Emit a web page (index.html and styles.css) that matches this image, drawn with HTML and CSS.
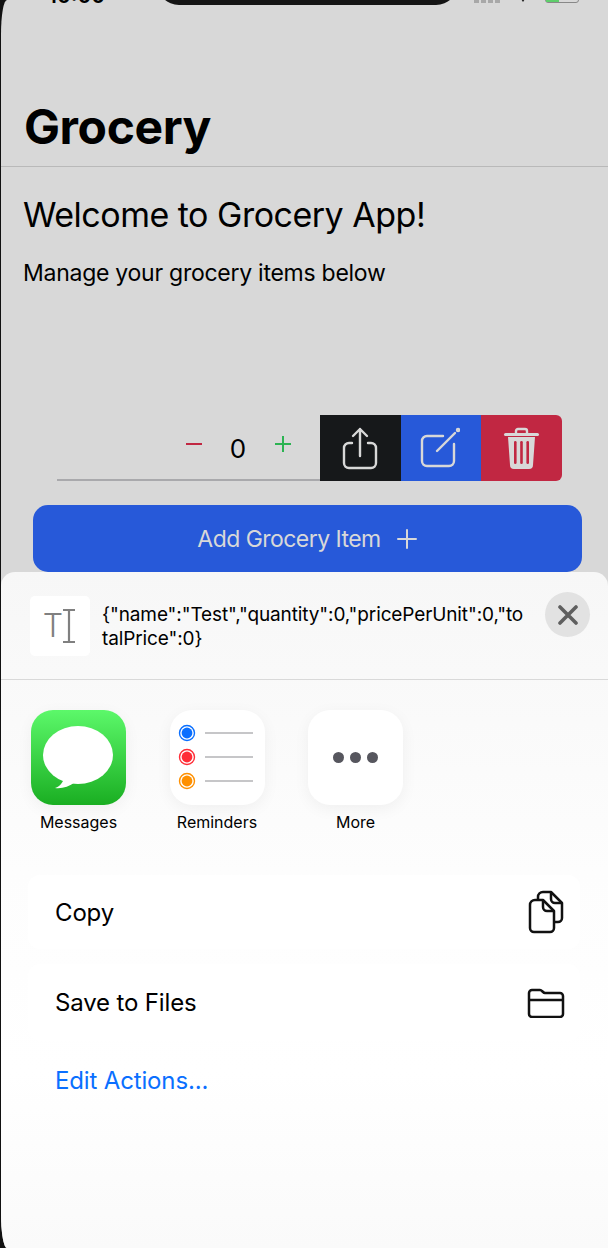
FILE: index.html
```html
<!DOCTYPE html>
<html>
  <head>
    <meta charset="UTF-8" />
    <meta name="viewport" content="width=device-width, initial-scale=1" />
    <title>Grocery</title>
    <link rel="stylesheet" href="styles.css">
  </head>
  <body>
    <main class="screen">
      <div class="status-bar">
        <span class="status-time">10:00</span>
        <div class="notch"></div>
        <div class="status-icons">
          <span class="signal"></span>
          <span class="wifi"></span>
          <span class="battery"><span class="battery-level"></span></span>
        </div>
      </div>

      <header class="nav-header">
        <h1>Grocery</h1>
      </header>

      <section class="content">
        <h2>Welcome to Grocery App!</h2>
        <p>Manage your grocery items below</p>
      </section>

      <div class="item-row">
        <div class="item-main">
          <span class="qty-minus"></span>
          <span class="qty-value">0</span>
          <span class="qty-plus"></span>
        </div>
        <div class="swipe-btn swipe-share">
          <svg width="36" height="44" viewBox="0 0 36 44" fill="none" stroke="#d8d8d8" stroke-width="2.4" stroke-linecap="round" stroke-linejoin="round">
            <path d="M10 17H7a5 5 0 0 0-5 5v15a5 5 0 0 0 5 5h22a5 5 0 0 0 5-5V22a5 5 0 0 0-5-5h-3" />
            <path d="M18 30V3M11 10l7-7 7 7" />
          </svg>
        </div>
        <div class="swipe-btn swipe-edit">
          <svg class="edit-icon" width="40" height="42" viewBox="0 0 40 42" fill="none" stroke="#d8d8d8" stroke-width="2.4" stroke-linecap="round" stroke-linejoin="round">
            <path d="M23 9H7a5 5 0 0 0-5 5v20a5 5 0 0 0 5 5h22a5 5 0 0 0 5-5V17" />
            <path d="M17 24L35 6" />
            <circle cx="38" cy="3" r="1" />
          </svg>
        </div>
        <div class="swipe-btn swipe-delete">
          <svg width="37" height="43" viewBox="0 0 37 43">
            <rect x="1" y="6" width="35" height="3" rx="1.5" fill="#d8d8d8" />
            <path d="M13 6V4a2 2 0 0 1 2-2h7a2 2 0 0 1 2 2v2" fill="none" stroke="#d8d8d8" stroke-width="2.4" />
            <path d="M5 10h27l-2 28a4 4 0 0 1-4 4H11a4 4 0 0 1-4-4z" fill="#d8d8d8" />
            <rect x="11" y="14" width="2.6" height="23" rx="1.3" fill="#c12742" />
            <rect x="17.2" y="14" width="2.6" height="23" rx="1.3" fill="#c12742" />
            <rect x="23.4" y="14" width="2.6" height="23" rx="1.3" fill="#c12742" />
          </svg>
        </div>
      </div>

      <button class="add-btn">
        Add Grocery Item
        <svg width="22" height="22" viewBox="0 0 22 22" stroke="#d8d8d8" stroke-width="2" stroke-linecap="round">
          <path d="M11 2v18M2 11h18" />
        </svg>
      </button>

      <section class="share-sheet">
        <div class="sheet-head">
          <div class="text-tile">
            <span class="text-tile-t">T</span>
            <svg width="12" height="34" viewBox="0 0 12 34" fill="none" stroke="#808080" stroke-width="2.2">
              <path d="M0 1h12M6 1v32M0 33h12" />
            </svg>
          </div>
          <div class="sheet-text">{"name":"Test","quantity":0,"pricePerUnit":0,"totalPrice":0}</div>
          <div class="sheet-close">
            <svg width="20" height="20" viewBox="0 0 20 20" stroke="#5f5f5f" stroke-width="3.6" stroke-linecap="round">
              <path d="M2 2l16 16M18 2L2 18" />
            </svg>
          </div>
        </div>

        <div class="app-row">
          <div class="app">
            <div class="app-icon app-messages">
              <svg width="95" height="95" viewBox="0 0 95 95">
                <ellipse cx="47" cy="45" rx="35" ry="29" fill="#fff" />
                <path d="M33 68c-1 5-5 9-9 10 6 1 14-1 20-6z" fill="#fff" />
              </svg>
            </div>
            <span>Messages</span>
          </div>
          <div class="app">
            <div class="app-icon">
              <svg width="95" height="95" viewBox="0 0 95 95" fill="none">
                <circle cx="17" cy="23" r="7.5" stroke="#0a6fff" stroke-width="1.4" />
                <circle cx="17" cy="23" r="5.4" fill="#0a6fff" />
                <path d="M35 23h48" stroke="#c6c6c8" stroke-width="2" />
                <circle cx="17" cy="47" r="7.5" stroke="#ff2d37" stroke-width="1.4" />
                <circle cx="17" cy="47" r="5.4" fill="#ff2d37" />
                <path d="M35 47h48" stroke="#c6c6c8" stroke-width="2" />
                <circle cx="17" cy="71" r="7.5" stroke="#ff9000" stroke-width="1.4" />
                <circle cx="17" cy="71" r="5.4" fill="#ff9000" />
                <path d="M35 71h48" stroke="#c6c6c8" stroke-width="2" />
              </svg>
            </div>
            <span>Reminders</span>
          </div>
          <div class="app">
            <div class="app-icon app-more">
              <i></i><i></i><i></i>
            </div>
            <span>More</span>
          </div>
        </div>

        <div class="action-card action-copy">
          <span>Copy</span>
          <svg width="38" height="44" viewBox="0 0 38 44" fill="none" stroke="#111" stroke-width="2.5" stroke-linejoin="round">
            <path d="M11 10V7a5 5 0 0 1 5-5h8l11 11v15a4 4 0 0 1-4 4h-4" />
            <path d="M24 2v7a4 4 0 0 0 4 4h7" />
            <path d="M8 10h8l11 11v17a4 4 0 0 1-4 4H7a4 4 0 0 1-4-4V15a5 5 0 0 1 5-5z" fill="#fff" />
            <path d="M16 10v7a4 4 0 0 0 4 4h7" />
          </svg>
        </div>
        <div class="action-card action-save">
          <span>Save to Files</span>
          <svg width="38" height="30" viewBox="0 0 38 30" fill="none" stroke="#111" stroke-width="2.5" stroke-linejoin="round">
            <path d="M2 5a3 3 0 0 1 3-3h8c2 0 3 3 5 3h15a3 3 0 0 1 3 3v18a3 3 0 0 1-3 3H5a3 3 0 0 1-3-3z" />
            <path d="M2 12h34" />
          </svg>
        </div>
        <a class="edit-actions">Edit Actions...</a>
      </section>
    </main>
  </body>
</html>
```

FILE: styles.css
```css
html,
body {
  margin: 0;
  height: 100%;
  background-color: #111;
}

body {
  font-family: Inter, "Liberation Sans", sans-serif;
  overflow: hidden;
}

.screen {
  box-sizing: border-box;
  width: 607px;
  height: 1248px;
  margin-left: 1px;
  display: flex;
  flex-direction: column;
  background-color: #d8d8d8;
  border-top-left-radius: 6px 34px;
  border-bottom-left-radius: 6px 34px;
  overflow: hidden;
}

/* only the bottom of the status bar is in the shot */
.status-bar {
  height: 5px;
  flex: none;
  position: relative;
  display: flex;
}

.status-time {
  position: absolute;
  left: 47px;
  top: -15px;
  font-size: 21px;
  line-height: 22px;
  font-weight: 600;
  color: #000;
}

.notch {
  position: absolute;
  left: 156px;
  top: -30px;
  width: 301px;
  height: 35px;
  background-color: #151515;
  border-radius: 0 0 22px 22px;
}

.status-icons {
  position: absolute;
  left: 473px;
  top: -10px;
  display: flex;
  gap: 16px;
}

.signal {
  width: 27px;
  height: 13px;
  background: repeating-linear-gradient(90deg, #a8a8a8 0 5px, transparent 5px 7px);
}

.wifi {
  width: 0;
  height: 0;
  margin-top: 3px;
  border: 6px solid transparent;
  border-top: 9px solid #222;
  border-bottom: 0;
}

.battery {
  width: 32px;
  height: 11px;
  border: 1px solid #888;
  border-radius: 3px;
  display: block;
}

.battery-level {
  display: block;
  width: 13px;
  height: 100%;
  background-color: #5fce6c;
}

.nav-header {
  height: 162px;
  flex: none;
  box-sizing: border-box;
  border-bottom: 1px solid #b9b9b9;
  padding: 93px 0 0 23px;
}

h1 {
  margin: 0;
  font-size: 48px;
  line-height: 58px;
  font-weight: 700;
  letter-spacing: -0.4px;
  color: #000;
}

.content {
  height: 248px;
  flex: none;
  box-sizing: border-box;
  padding: 27px 0 0 22px;
}

h2 {
  margin: 0;
  font-size: 34px;
  line-height: 42px;
  font-weight: 400;
  letter-spacing: -0.5px;
  color: #000;
}

.content p {
  margin: 22px 0 0;
  font-size: 23px;
  line-height: 30px;
  letter-spacing: -0.26px;
  color: #000;
}

.item-row {
  height: 66px;
  flex: none;
  display: flex;
  margin-left: 56px;
  width: 505px;
}

.item-main {
  width: 263px;
  flex: none;
  box-sizing: border-box;
  border-bottom: 2px solid #a9a9ac;
  display: flex;
  align-items: center;
  padding-left: 129px;
}

.qty-minus {
  width: 16px;
  height: 2px;
  margin-bottom: 6px;
  background-color: #c12742;
}

.qty-value {
  width: 26px;
  margin: 4px 0 0 23px;
  font-size: 26px;
  line-height: 30px;
  text-align: center;
  color: #000;
}

.qty-plus {
  width: 16px;
  height: 16px;
  margin: 0 0 6px 24px;
  background:
    linear-gradient(#2cb352, #2cb352) center / 16px 2px no-repeat,
    linear-gradient(#2cb352, #2cb352) center / 2px 16px no-repeat;
}

.swipe-btn {
  flex: 1;
  display: flex;
  align-items: center;
  justify-content: center;
}

.swipe-share {
  background-color: #16181a;
}

.swipe-edit {
  background-color: #2759d9;
}

.edit-icon {
  margin-right: 3px;
}

.swipe-delete {
  background-color: #c12742;
  border-radius: 0 6px 6px 0;
}

.add-btn {
  flex: none;
  width: 549px;
  height: 67px;
  margin: 24px 0 0 32px;
  display: flex;
  align-items: center;
  justify-content: center;
  gap: 15px;
  border: none;
  border-radius: 15px;
  background-color: #2759d9;
  color: #d8d8d8;
  font-family: inherit;
  font-size: 23px;
  letter-spacing: -0.55px;
}

.share-sheet {
  flex: 1;
  border-radius: 14px 14px 0 0;
  background: linear-gradient(#f7f7f7 0, #fdfdfd 300px, #fff 500px, #fafafa 676px);
}

.sheet-head {
  height: 108px;
  box-sizing: border-box;
  border-bottom: 1px solid #d9d9d9;
  padding: 24px 18px 0 29px;
  display: flex;
  align-items: flex-start;
}

.text-tile {
  width: 60px;
  height: 60px;
  flex: none;
  display: flex;
  align-items: center;
  justify-content: center;
  padding-right: 2px;
  box-sizing: border-box;
  background-color: #fff;
  border-radius: 5px;
}

.text-tile-t {
  font-size: 32px;
  line-height: 36px;
  font-weight: 300;
  color: #808080;
}

.sheet-text {
  width: 425px;
  flex: none;
  margin: 7px 0 0 12px;
  font-size: 19px;
  line-height: 24px;
  letter-spacing: -0.12px;
  color: #000;
  word-break: break-all;
}

.sheet-close {
  width: 45px;
  height: 45px;
  flex: none;
  margin: -4px 0 0 18px;
  border-radius: 50%;
  background-color: #e2e2e2;
  display: flex;
  align-items: center;
  justify-content: center;
}

.app-row {
  display: flex;
  gap: 43.5px;
  padding: 30px 0 0 30px;
}

.app {
  width: 95px;
  display: flex;
  flex-direction: column;
  align-items: center;
  gap: 7px;
  font-size: 16px;
  line-height: 20px;
  color: #000;
  white-space: nowrap;
}

.app-icon {
  width: 95px;
  height: 95px;
  border-radius: 22px;
  background-color: #fff;
  box-shadow: 0 4px 16px rgba(0, 0, 0, 0.05);
}

.app-messages {
  background: linear-gradient(#5cf86a, #1aae22);
}

.app-more {
  display: flex;
  align-items: center;
  justify-content: center;
  gap: 6px;
}

.app-more i {
  width: 11px;
  height: 11px;
  border-radius: 50%;
  background-color: #56565e;
}

.action-card {
  width: 552px;
  box-sizing: border-box;
  margin-left: 27px;
  padding: 0 15px 0 27px;
  display: flex;
  align-items: center;
  justify-content: space-between;
  background-color: #fff;
  border-radius: 12px;
  font-size: 24px;
  letter-spacing: -0.15px;
  color: #000;
}

.action-copy {
  height: 74px;
  margin-top: 43px;
}

.action-save {
  height: 77px;
  margin-top: 15px;
}

.edit-actions {
  display: block;
  margin: 25px 0 0 54px;
  font-size: 24px;
  line-height: 30px;
  letter-spacing: -0.15px;
  color: #0a6fff;
}
```
